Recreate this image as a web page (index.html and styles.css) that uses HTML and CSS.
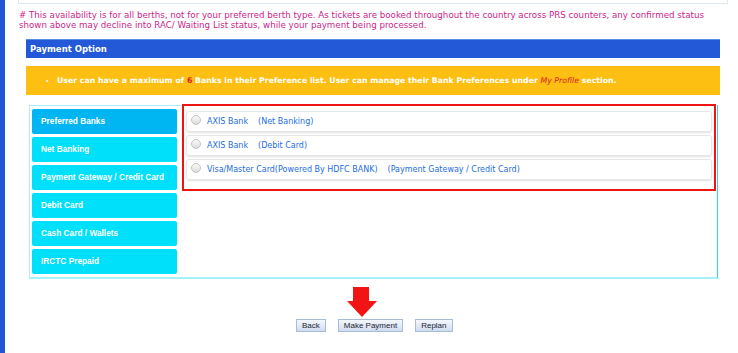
FILE: index.html
```html
<!DOCTYPE html>
<html lang="en">
<head>
    <meta charset="UTF-8">
    <title>Payment Option</title>
    <link rel="stylesheet" href="styles.css">
</head>
<body>
    <div class="page">
        <div class="sidebar"></div>
        <div class="main">
            <div class="prev-box"></div>
            <p class="note"># This availability is for all berths, not for your preferred berth type. As tickets are booked throughout the country across PRS counters, any confirmed status shown above may decline into RAC/ Waiting List status, while your payment being processed.</p>

            <div class="payment">
                <div class="payment-head">Payment Option</div>
                <div class="notice">
                    <ul>
                        <li>User can have a maximum of <span class="count">6</span> Banks in their Preference list. User can manage their Bank Preferences under <em>My Profile</em> section.</li>
                    </ul>
                </div>

                <div class="options">
                    <ul class="tabs">
                        <li class="tab active">Preferred Banks</li>
                        <li class="tab">Net Banking</li>
                        <li class="tab">Payment Gateway / Credit Card</li>
                        <li class="tab">Debit Card</li>
                        <li class="tab">Cash Card / Wallets</li>
                        <li class="tab">IRCTC Prepaid</li>
                    </ul>
                    <div class="banks">
                        <label class="bank-row">
                            <span class="radio"></span>
                            <span class="bank-name">AXIS Bank</span>
                            <span class="bank-type">(Net Banking)</span>
                        </label>
                        <label class="bank-row">
                            <span class="radio"></span>
                            <span class="bank-name">AXIS Bank</span>
                            <span class="bank-type">(Debit Card)</span>
                        </label>
                        <label class="bank-row">
                            <span class="radio"></span>
                            <span class="bank-name">Visa/Master Card(Powered By HDFC BANK)</span>
                            <span class="bank-type">(Payment Gateway / Credit Card)</span>
                        </label>
                    </div>
                </div>
            </div>

            <div class="pointer">
                <svg width="30" height="30" viewBox="0 0 30 30">
                    <path d="M6 0 H22 V14 H30 L15 30 L0 14 H6 Z" fill="#f01414"/>
                </svg>
            </div>
            <div class="actions">
                <button class="btn">Back</button>
                <button class="btn">Make Payment</button>
                <button class="btn">Replan</button>
            </div>
        </div>
    </div>
</body>
</html>
```

FILE: styles.css
```css
body {
    margin: 0;
    background: #fff;
    font-family: "DejaVu Sans", Verdana, sans-serif;
}

.page {
    display: flex;
    min-height: 353px;
}

.sidebar {
    width: 5px;
    background: #2255d5;
    flex-shrink: 0;
}

.main {
    width: 710px;
    padding-left: 13px;
}

.prev-box {
    height: 3px;
    border: 1px solid #dfe9f3;
    border-top: none;
}

.note {
    width: 692px;
    margin: 6px 0 9px 1px;
    font-size: 8.7px;
    line-height: 10px;
    color: #cc1e8a;
}

.payment {
    margin-left: 8px;
    width: 694px;
}

.payment-head {
    height: 18px;
    line-height: 18px;
    border-top: 1px solid #5d8ce8;
    background: #2359d6;
    color: #fff;
    font-weight: bold;
    font-size: 8.5px;
    padding-left: 4px;
}

.notice {
    margin-top: 8px;
    height: 29px;
    background: #fdbf12;
    display: flex;
    align-items: center;
}

.notice ul {
    margin: 0;
    padding-left: 31px;
}

.notice li {
    color: #fff;
    font-weight: bold;
    font-size: 7.8px;
}

.notice .count {
    color: #e41b1b;
}

.notice em {
    color: #d41c2c;
    font-weight: normal;
}

.options {
    margin: 10px 2px 0 3px;
    border: 1px solid #a6f1f8;
    border-right-color: #22d6ee;
    border-bottom-width: 2px;
    display: flex;
    padding: 3px 1px 3px 2px;
}

.tabs {
    list-style: none;
    margin: 0;
    padding: 0;
    width: 145px;
    flex-shrink: 0;
}

.tab {
    height: 25px;
    line-height: 25px;
    margin-bottom: 3px;
    padding-left: 9px;
    background: #00e0fa;
    border-radius: 2px;
    color: #fff;
    font-family: "Liberation Sans", Arial, sans-serif;
    font-weight: bold;
    font-size: 8.3px;
    white-space: nowrap;
}

.tab:last-child {
    margin-bottom: 0;
}

.tab.active {
    background: #00b6f2;
}

.banks {
    box-sizing: border-box;
    margin: -5px 0 0 5px;
    flex: 1;
    height: 87px;
    border: 2px solid #ee1414;
    padding: 5px 2px 0 2px;
    display: flex;
    flex-direction: column;
    gap: 3px;
}

.bank-row {
    box-sizing: border-box;
    height: 21px;
    display: flex;
    align-items: center;
    border: 1px solid #e6e6e6;
    border-radius: 3px;
    box-shadow: 0 1px 2px rgba(0, 0, 0, 0.12);
    font-size: 8px;
    color: #246ee0;
    padding-left: 4px;
}

.radio {
    width: 8px;
    height: 8px;
    border: 1px solid #c4c4c4;
    border-radius: 50%;
    background: linear-gradient(#fafafa, #dcdcdc);
    margin: -4px 6px 0 0;
}

.bank-name {
    margin-right: 10px;
}

.pointer {
    margin: 8px 0 0 329px;
    height: 30px;
}

.pointer svg {
    display: block;
}

.actions {
    margin-top: 2px;
    display: flex;
    gap: 12px;
    padding-left: 278px;
}

.btn {
    height: 13px;
    padding: 0 5px;
    border: 1px solid #a8bcd6;
    background: linear-gradient(#f4f8fd, #cfdcef);
    font-family: "Liberation Sans", Arial, sans-serif;
    font-size: 8px;
    color: #1c2433;
    line-height: 11px;
}
```
